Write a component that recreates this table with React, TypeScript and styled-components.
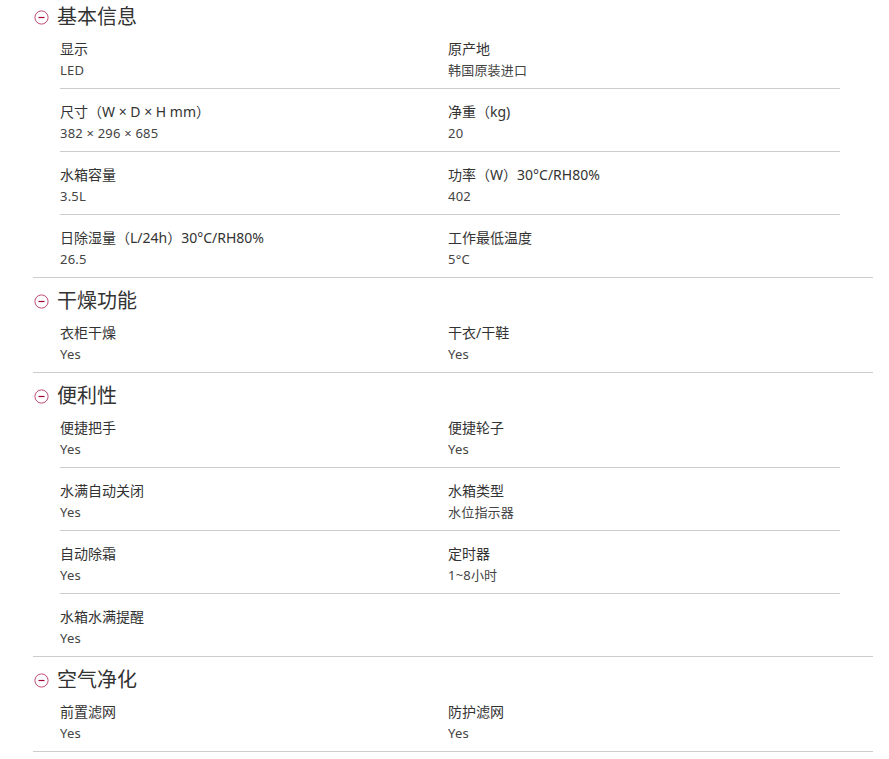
import styled, { createGlobalStyle } from "styled-components";

const GlobalStyle = createGlobalStyle`
  body {
    margin: 0;
    background: #ffffff;
    font-family: "Noto Sans", "Noto Sans CJK SC", sans-serif;
    color: #333333;
  }
`;

type Spec = { label: string; value: string };
type Group = { title: string; rows: Spec[][] };

const groups: Group[] = [
  {
    title: "基本信息",
    rows: [
      [
        { label: "显示", value: "LED" },
        { label: "原产地", value: "韩国原装进口" },
      ],
      [
        { label: "尺寸（W × D × H mm）", value: "382 × 296 × 685" },
        { label: "净重（kg)", value: "20" },
      ],
      [
        { label: "水箱容量", value: "3.5L" },
        { label: "功率（W）30°C/RH80%", value: "402" },
      ],
      [
        { label: "日除湿量（L/24h）30°C/RH80%", value: "26.5" },
        { label: "工作最低温度", value: "5°C" },
      ],
    ],
  },
  {
    title: "干燥功能",
    rows: [
      [
        { label: "衣柜干燥", value: "Yes" },
        { label: "干衣/干鞋", value: "Yes" },
      ],
    ],
  },
  {
    title: "便利性",
    rows: [
      [
        { label: "便捷把手", value: "Yes" },
        { label: "便捷轮子", value: "Yes" },
      ],
      [
        { label: "水满自动关闭", value: "Yes" },
        { label: "水箱类型", value: "水位指示器" },
      ],
      [
        { label: "自动除霜", value: "Yes" },
        { label: "定时器", value: "1~8小时" },
      ],
      [{ label: "水箱水满提醒", value: "Yes" }],
    ],
  },
  {
    title: "空气净化",
    rows: [
      [
        { label: "前置滤网", value: "Yes" },
        { label: "防护滤网", value: "Yes" },
      ],
    ],
  },
];

const Page = styled.div`
  width: 840px;
  margin-left: 33px;
`;

const Section = styled.section`
  border-bottom: 1px solid #cccccc;
`;

const Header = styled.div<{ $first?: boolean }>`
  display: flex;
  align-items: center;
  gap: 8px;
  padding: ${({ $first }) => ($first ? "8px" : "14px")} 0 0 1px;
  height: 18px;
`;

const Title = styled.h2`
  margin: 0;
  font-size: 20px;
  font-weight: 400;
  line-height: 18px;
  color: #333333;
`;

const ToggleIcon = styled.svg`
  width: 15px;
  height: 15px;
  flex-shrink: 0;
`;

const Rows = styled.div`
  width: 780px;
  margin-left: 27px;
`;

const Row = styled.div`
  display: grid;
  grid-template-columns: 388px 1fr;
  padding: 13px 0 8px;
  & + & {
    border-top: 1px solid #cccccc;
  }
`;

const Item = styled.div`
  display: flex;
  flex-direction: column;
  gap: 1px;
`;

const Label = styled.div`
  font-size: 14px;
  line-height: 20px;
  color: #333333;
`;

const Value = styled.div`
  font-size: 13px;
  line-height: 20px;
  letter-spacing: 0.2px;
  color: #444444;
`;

const MinusCircle = () => (
  <ToggleIcon viewBox="0 0 15 15">
    <circle cx="7.5" cy="7.5" r="6.6" fill="none" stroke="#c04a78" strokeWidth="1" />
    <line x1="4.5" y1="7.5" x2="10.5" y2="7.5" stroke="#a50034" strokeWidth="1.2" />
  </ToggleIcon>
);

const App = () => {
  return (
    <>
      <GlobalStyle />
      <Page>
        {groups.map((group, gi) => (
          <Section key={group.title}>
            <Header $first={gi === 0}>
              <MinusCircle />
              <Title>{group.title}</Title>
            </Header>
            <Rows>
              {group.rows.map((row, ri) => (
                <Row key={ri}>
                  {row.map((spec) => (
                    <Item key={spec.label}>
                      <Label>{spec.label}</Label>
                      <Value>{spec.value}</Value>
                    </Item>
                  ))}
                </Row>
              ))}
            </Rows>
          </Section>
        ))}
      </Page>
    </>
  );
};

export default App;
